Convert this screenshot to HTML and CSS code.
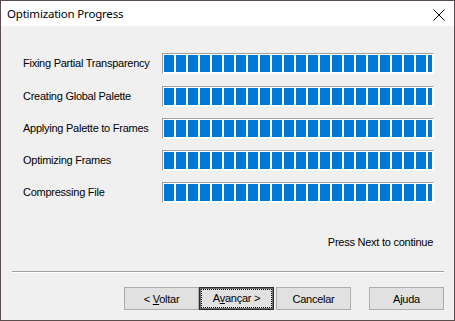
FILE: index.html
```html
<!DOCTYPE html>
<html lang="en">
  <head>
    <meta charset="UTF-8" />
    <title>Optimization Progress</title>
    <link rel="stylesheet" href="styles.css">
  </head>
  <body>
    <!-- dialog window -->
    <div class="dlg">
      <!-- title bar -->
      <div class="titlebar">
        <span class="title">Optimization Progress</span>
        <span class="close">
          <svg width="12" height="12" viewBox="0 0 12 12">
            <path d="M0.5 0.5 L11.5 11.5 M11.5 0.5 L0.5 11.5" stroke="#000" stroke-width="1" fill="none" />
          </svg>
        </span>
      </div>

      <!-- progress rows -->
      <div class="content">
        <ul class="steps">
          <li><span class="lbl">Fixing Partial Transparency</span><span class="bar"><span class="fill"></span></span></li>
          <li><span class="lbl">Creating Global Palette</span><span class="bar"><span class="fill"></span></span></li>
          <li><span class="lbl">Applying Palette to Frames</span><span class="bar"><span class="fill"></span></span></li>
          <li><span class="lbl">Optimizing Frames</span><span class="bar"><span class="fill"></span></span></li>
          <li><span class="lbl">Compressing File</span><span class="bar"><span class="fill"></span></span></li>
        </ul>
        <p class="status">Press Next to continue</p>
      </div>

      <!-- separator + buttons -->
      <div class="sep"></div>
      <div class="btns">
        <button class="btn">&lt; <u>V</u>oltar</button>
        <button class="btn default"><span class="focus">A<u>v</u>ançar &gt;</span></button>
        <button class="btn cancel">Cancelar</button>
        <button class="btn help">Ajuda</button>
      </div>
    </div>
  </body>
</html>
```

FILE: styles.css
```css
/* reset */
html,
body,
ul,
p {
  margin: 0;
  padding: 0;
}
ul {
  list-style: none;
}

body {
  background-color: #f0f0f0;
  font-family: "Liberation Sans", Arial, sans-serif;
  font-size: 11px;
  letter-spacing: -0.25px;
  color: #000;
}

/* window box */
.dlg {
  display: flex;
  flex-direction: column;
  width: 455px;
  height: 321px;
  box-sizing: border-box;
  border: 1px solid #5c4d4d;
  background-color: #f0f0f0;
}

/* title bar */
.titlebar {
  display: flex;
  align-items: center;
  justify-content: space-between;
  height: 25px;
  padding: 0 9px 0 6px;
  background-color: #fff;
}
.title {
  font-family: "Noto Sans", sans-serif;
  font-size: 11.5px;
  letter-spacing: -0.2px;
  line-height: 16px;
}
.close {
  display: flex;
  margin-top: 2px;
}

/* progress rows */
.content {
  padding: 27px 20px 0 22px;
}
.steps {
  display: flex;
  flex-direction: column;
  gap: 11px;
}
.steps li {
  display: flex;
  align-items: center;
  height: 21px;
}
.steps li:nth-child(2) {
  margin-top: 1px;
}
.lbl {
  width: 139px;
  flex: none;
  line-height: 13px;
}
.bar {
  display: block;
  width: 272px;
  height: 21px;
  box-sizing: border-box;
  padding: 1px;
  border-top: 1px solid #a0a0a0;
  border-left: 1px solid #a0a0a0;
  border-right: 1px solid #fff;
  border-bottom: 1px solid #fff;
  background-color: #fff;
}
.fill {
  display: block;
  width: 100%;
  height: 100%;
  /* blue blocks 10px + 2px gap */
  background: repeating-linear-gradient(to right, #0078d7 0, #0078d7 10px, #fff 10px, #fff 12px);
}

.status {
  margin-top: 33px;
  margin-right: 1px;
  text-align: right;
  line-height: 13px;
}

/* etched line */
.sep {
  margin: 22px 10px 0 11px;
  border-top: 1px solid #a0a0a0;
  border-bottom: 1px solid #fff;
}

/* buttons */
.btns {
  display: flex;
  justify-content: flex-end;
  margin-top: 14px;
  padding-right: 10px;
}
.btn {
  width: 75px;
  height: 23px;
  padding: 0;
  border: 1px solid #adadad;
  background-color: #e1e1e1;
  font-family: "Liberation Sans", Arial, sans-serif;
  font-size: 11px;
  letter-spacing: -0.25px;
  color: #000;
}
.btn.default {
  border: 1px solid #2b2b2b;
  box-shadow: inset 0 0 0 1px #6e6e6e;
}
.btn.default .focus {
  display: block;
  margin: 2px;
  height: 17px;
  line-height: 17px;
  outline: 1px dotted #000;
}
.btn.cancel {
  margin-left: 2px;
}
.btn.help {
  margin-left: 18px;
}
```
